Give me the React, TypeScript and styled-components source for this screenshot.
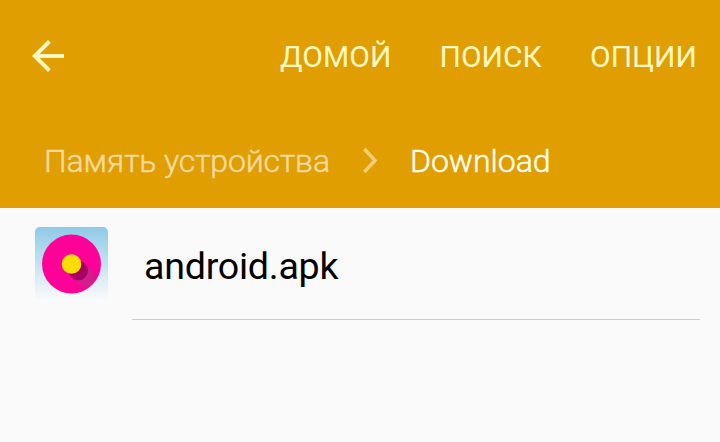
import React from 'react';
import styled, { createGlobalStyle } from 'styled-components';

const GlobalStyle = createGlobalStyle`
  body {
    margin: 0;
    background: #fafafa;
    font-family: Roboto, 'Noto Sans', sans-serif;
  }
`;

const Screen = styled.div`
  width: 720px;
  height: 442px;
  overflow: hidden;
  background: #fafafa;
`;

const Header = styled.header`
  height: 208px;
  background: #e09e00;
`;

const ActionBar = styled.div`
  display: flex;
  align-items: center;
  height: 112px;
  padding: 0 23px 0 24px;
`;

const BackButton = styled.a`
  display: flex;
  margin-right: auto;
  color: #fff8c4;
`;

const Actions = styled.nav`
  display: flex;
  gap: 48px;
  padding-top: 2px;
`;

const Action = styled.a`
  color: #fff8c4;
  font-size: 30px;
  line-height: 36px;
  letter-spacing: 0.05px;
  white-space: nowrap;
`;

const Breadcrumbs = styled.div`
  display: flex;
  align-items: center;
  height: 96px;
  padding-left: 44px;
`;

const Crumb = styled.span<{ $active?: boolean }>`
  padding-top: 2px;
  color: ${(props) => (props.$active ? '#fffdf5' : '#f4daa0')};
  font-size: 32px;
  font-weight: 300;
  line-height: 38px;
  letter-spacing: ${(props) => (props.$active ? '0' : '-0.12px')};
  -webkit-text-stroke: 0.5px currentColor;
  white-space: nowrap;
`;

const Separator = styled.svg`
  flex: none;
  margin: 0 31px;
`;

const FileRow = styled.div`
  display: flex;
  padding-right: 20px;
`;

const FileIcon = styled.svg`
  flex: none;
  margin: 19px 24px 0 35px;
`;

const FileInfo = styled.div`
  flex: 1;
  display: flex;
  align-items: center;
  height: 112px;
  padding: 4px 0 0 12px;
  border-bottom: 1px solid #cdcdcd;
  box-sizing: border-box;
`;

const FileName = styled.span`
  color: #000;
  font-size: 37.6px;
  line-height: 44px;
  letter-spacing: -0.25px;
`;

const ApkIcon = () => (
  <FileIcon width='73' height='73' viewBox='0 0 73 73'>
    <defs>
      <linearGradient id='sky' x1='0' y1='0' x2='0' y2='1'>
        <stop offset='0' stopColor='#8ecae8' />
        <stop offset='1' stopColor='#fafafa' />
      </linearGradient>
      <clipPath id='disc'>
        <circle cx='36.5' cy='37' r='29.5' />
      </clipPath>
    </defs>
    <rect width='73' height='73' rx='5' fill='url(#sky)' />
    <circle cx='36.5' cy='37' r='29.5' fill='#ff0099' />
    <g clipPath='url(#disc)'>
      <circle cx='50.3' cy='50.3' r='9.7' fill='#d21f8a' />
      <circle cx='43.3' cy='43.6' r='9.7' fill='#a60063' />
    </g>
    <circle cx='36.5' cy='37' r='9.8' fill='#ffdd00' />
  </FileIcon>
);

export default function App() {
  return (
    <>
      <GlobalStyle />
      <Screen>
        <Header>
          <ActionBar>
            <BackButton>
              <svg width='48' height='48' viewBox='0 0 24 24' fill='currentColor'>
                <path d='M20 11H7.83l5.59-5.59L12 4l-8 8 8 8 1.41-1.41L7.83 13H20v-2z' />
              </svg>
            </BackButton>
            <Actions>
              <Action>ДОМОЙ</Action>
              <Action>ПОИСК</Action>
              <Action>ОПЦИИ</Action>
            </Actions>
          </ActionBar>
          <Breadcrumbs>
            <Crumb>Память устройства</Crumb>
            <Separator width='18' height='28' viewBox='0 0 18 28' fill='none'>
              <path d='M3.3 3 14 14.5 3.3 26' stroke='#f2cd80' strokeWidth='3.6' />
            </Separator>
            <Crumb $active>Download</Crumb>
          </Breadcrumbs>
        </Header>
        <FileRow>
          <ApkIcon />
          <FileInfo>
            <FileName>android.apk</FileName>
          </FileInfo>
        </FileRow>
      </Screen>
    </>
  );
}
